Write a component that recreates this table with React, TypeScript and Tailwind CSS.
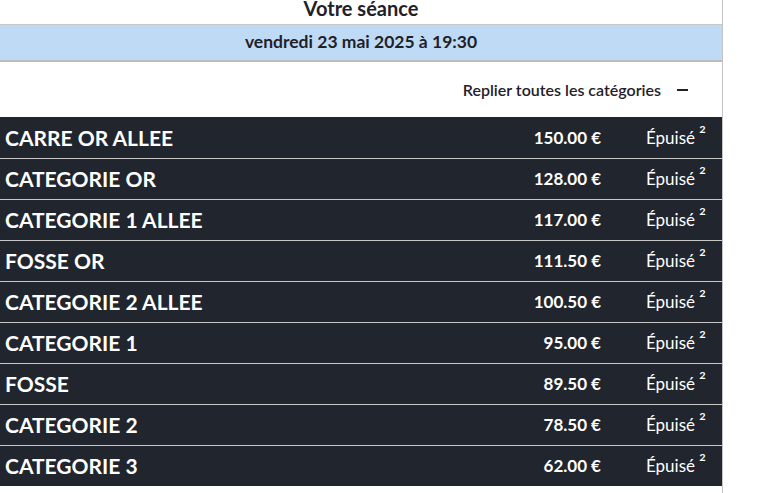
import React from "react";

const rows: [string, string][] = [
  ["CARRE OR ALLEE", "150.00 €"],
  ["CATEGORIE OR", "128.00 €"],
  ["CATEGORIE 1 ALLEE", "117.00 €"],
  ["FOSSE OR", "111.50 €"],
  ["CATEGORIE 2 ALLEE", "100.50 €"],
  ["CATEGORIE 1", "95.00 €"],
  ["FOSSE", "89.50 €"],
  ["CATEGORIE 2", "78.50 €"],
  ["CATEGORIE 3", "62.00 €"],
];

export default function App() {
  return (
    <div className="w-[758px] h-[493px] overflow-hidden bg-white font-['Lato',sans-serif]">
      <div className="w-[723px] h-full border-r border-[#c4c4c4]">
        <div className="h-[25px] text-center text-[20px] leading-[17px] font-bold text-[#1f2129] border-b border-[#c8c8c8]">
          Votre séance
        </div>
        <div className="h-[37px] bg-[#bfdaf5] flex items-center justify-center text-[17.5px] font-bold text-[#1f2129] border-b-2 border-[#bdbdbd]">
          vendredi 23 mai 2025 à 19:30
        </div>
        <div className="h-[55px] flex items-center justify-end pr-[34px] text-[16px] font-semibold text-[#1f2129]">
          <span>Replier toutes les catégories</span>
          <span className="ml-[16px] w-[11px] h-[2px] bg-[#1f2129]" />
        </div>
        <div className="bg-[#20252e]">
          {rows.map(([name, price], i) => (
            <div
              key={i}
              className={`h-[41px] flex items-center text-white ${i > 0 ? "border-t border-[#c8c8c8]" : ""}`}
            >
              <div className="flex-1 pl-[5px] text-[21px] font-bold">{name}</div>
              <div className="w-[120px] text-right text-[17px] font-bold">{price}</div>
              <div className="w-[121px] pl-[45px] text-[17px] flex items-start">
                <span>Épuisé</span>
                <span className="ml-[4px] text-[21px] leading-[20px]">²</span>
              </div>
            </div>
          ))}
        </div>
      </div>
    </div>
  );
}
